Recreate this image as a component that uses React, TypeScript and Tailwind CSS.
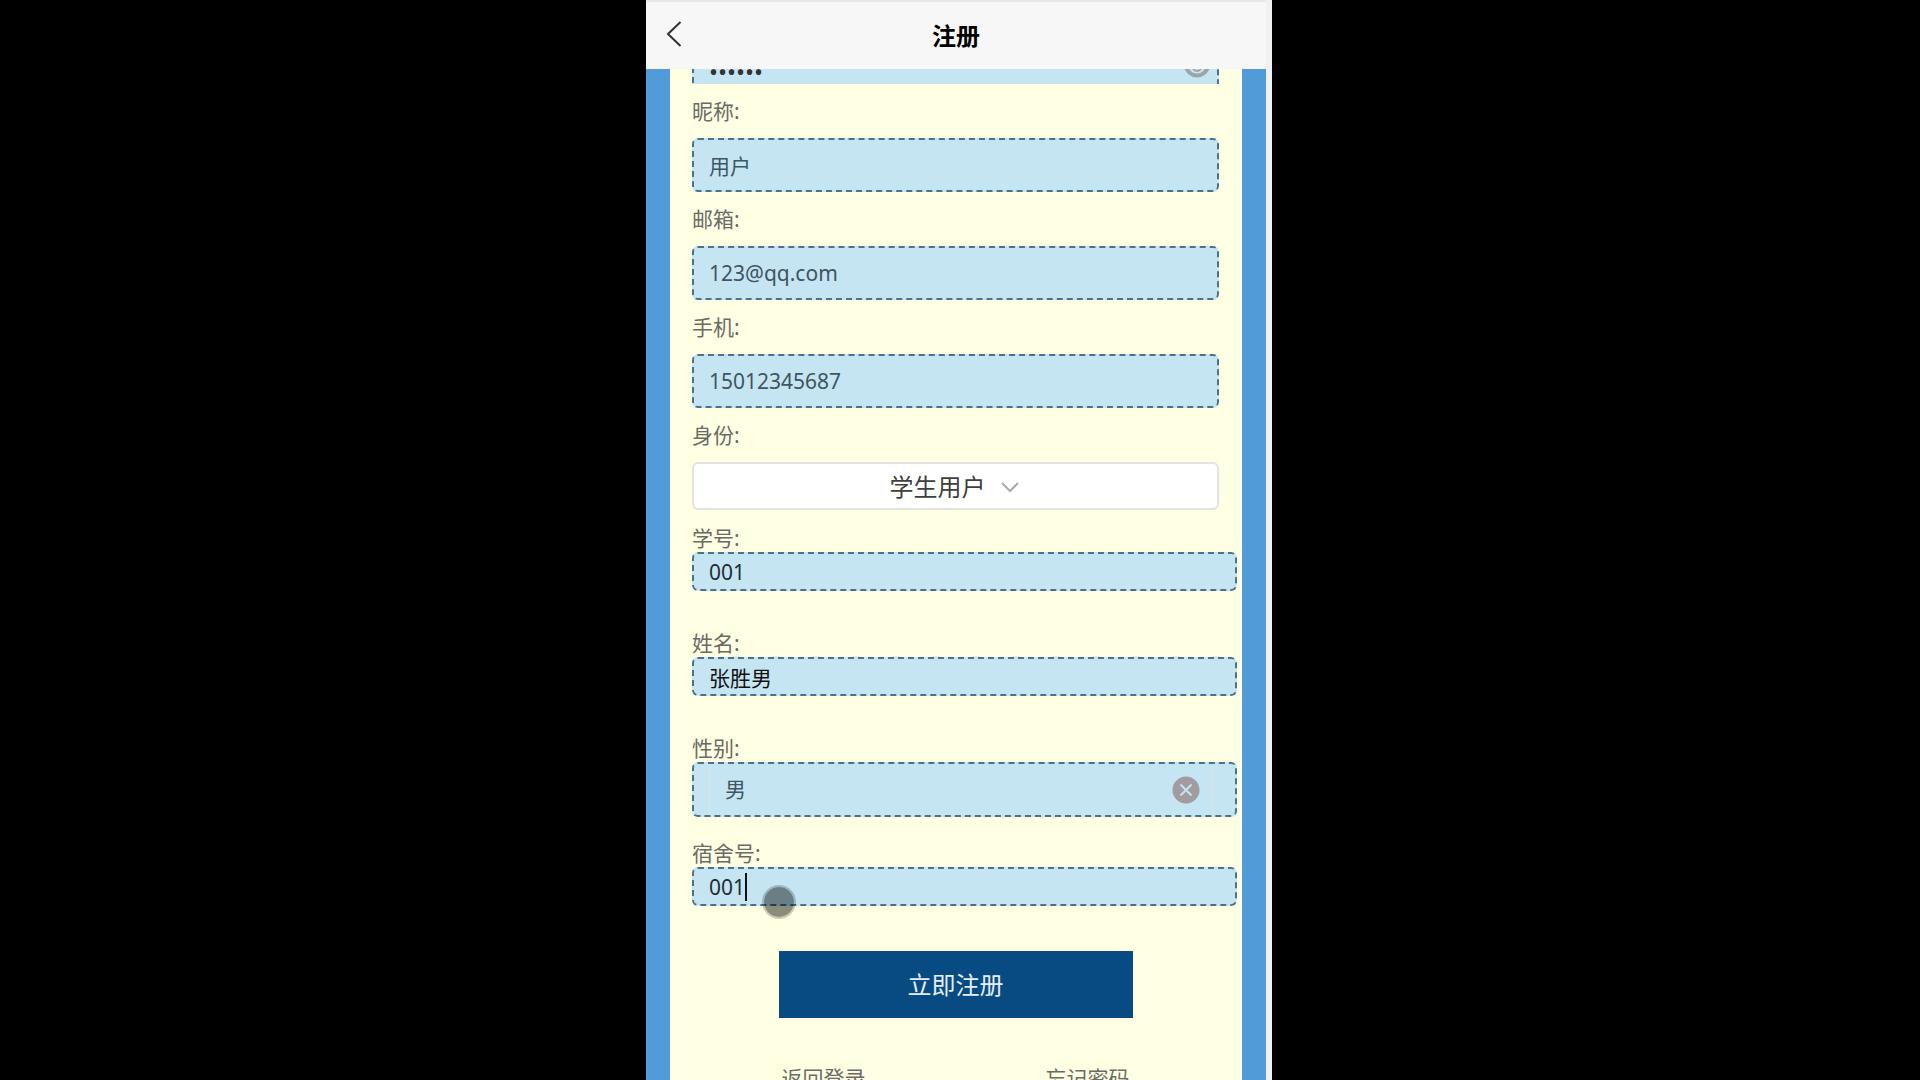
import React from 'react';

const fieldBase =
  'border-2 border-dashed border-[#4a7389] bg-[#c5e5f3] rounded-md outline-none';

type FieldProps = {
  id: string;
  label: string;
  value: string;
  type?: string;
};

const Field: React.FC<FieldProps> = ({ id, label, value, type = 'text' }) => (
  <div className="flex flex-col">
    <label htmlFor={id} className="h-[54px] leading-[54px] text-[21px] text-[#6b6b66]">{label}</label>
    <input id={id} type={type} defaultValue={value} className={`${fieldBase} h-[54px] px-[15px] text-[21px] text-[#3f5561]`} />
  </div>
);

const WideField: React.FC<{ id: string; label: string; children: React.ReactNode }> = ({ id, label, children }) => (
  <div className="flex flex-col h-[105px] -mr-[18px]">
    <label htmlFor={id} className="h-7 leading-7 text-[21px] text-[#6b6b66]">{label}</label>
    {children}
  </div>
);

const Header: React.FC = () => (
  <header className="relative z-10 shrink-0 h-[69px] border-t-2 border-[#e8e8e8] bg-[#f7f7f7] grid grid-cols-[56px_1fr_56px] items-center">
    <button type="button" aria-label="返回" className="h-full pb-1 flex items-center justify-center">
      <svg width="18" height="26" viewBox="0 0 18 26" fill="none" stroke="#333" strokeWidth="2">
        <path d="M15.5 1 3 13l12.5 12" />
      </svg>
    </button>
    <h1 className="text-center text-2xl font-bold text-black">注册</h1>
  </header>
);

export default function App() {
  return (
    <div className="h-screen overflow-hidden bg-black flex justify-center pr-0.5 font-['Noto_Sans','Noto_Sans_CJK_SC',sans-serif]">
      <div className="w-full max-w-[626px] flex bg-[#f1f1f3]">
        <div className="flex-1 min-w-0 flex flex-col">
          <Header />
          <main className="flex-1 min-h-0 overflow-hidden bg-[#529bd9] px-6">
            <form className="min-h-full bg-[#ffffe3] pl-[22px] pr-[23px] -mt-[25px] flex flex-col" onSubmit={(e) => e.preventDefault()}>
              {/* Password row, scrolled under the header */}
              <div className="relative flex flex-col">
                <input
                  type="password"
                  aria-label="密码"
                  defaultValue="123456"
                  className={`${fieldBase} h-[54px] px-[15px] text-2xl text-[#333]`}
                />
                <button type="button" aria-label="显示密码" className="absolute right-2 top-3 text-[#9ca4a9]">
                  <svg width="28" height="22" viewBox="0 0 28 22" fill="none" stroke="currentColor" strokeWidth="4">
                    <path d="M2 9C7-1 21-1 26 9 21 23 7 23 2 9Z" />
                    <circle cx="14" cy="11" r="4" strokeWidth="2" />
                    <path d="M11 12h6" strokeWidth="2" />
                  </svg>
                </button>
              </div>

              <div className="relative -mt-[14px] bg-[#ffffe3] flex flex-col">
                <Field id="nickname" label="昵称:" value="用户" />
                <Field id="email" label="邮箱:" value="123@qq.com" />
                <Field id="phone" label="手机:" value="15012345687" />

                <label htmlFor="role" className="h-[54px] leading-[54px] text-[21px] text-[#6b6b66]">身份:</label>
                <div className="relative">
                  <select
                    id="role"
                    className="appearance-none block w-full h-12 pt-0.5 pr-9 rounded-md border-2 border-[#e3e4e0] bg-white text-2xl text-[#404040] [text-align-last:center]"
                  >
                    <option>学生用户</option>
                  </select>
                  <div className="absolute inset-0 pt-0.5 pl-[108px] flex items-center justify-center pointer-events-none">
                    <svg width="18" height="12" viewBox="0 0 18 12" fill="none" stroke="#aaa" strokeWidth="2">
                      <path d="M1 2l8 8 8-8" />
                    </svg>
                  </div>
                </div>

                <div className="mt-[14px]">
                  <WideField id="studentNo" label="学号:">
                    <input id="studentNo" defaultValue="001" className={`${fieldBase} h-[39px] px-[15px] text-[21px] text-[#1f2d36]`} />
                  </WideField>
                  <WideField id="name" label="姓名:">
                    <input id="name" defaultValue="张胜男" className={`${fieldBase} h-[39px] px-[15px] text-[21px] text-[#111]`} />
                  </WideField>
                  <WideField id="gender" label="性别:">
                    <div className={`${fieldBase} h-[55px] pl-[15px] pr-[22px] flex text-[21px]`}>
                      <div className="flex-1 flex items-center border-x border-[#dde3e3] pl-[15px] pr-3">
                        <input id="gender" defaultValue="男" className="flex-1 min-w-0 bg-transparent outline-none text-[#3f5561]" />
                        <button type="button" aria-label="清除">
                          <svg width="28" height="28" viewBox="0 0 28 28" fill="none">
                            <circle cx="14" cy="14" r="13.5" fill="#a19c9f" />
                            <path d="M8.5 8.5l11 11M19.5 8.5l-11 11" stroke="#c5e5f3" strokeWidth="2" />
                          </svg>
                        </button>
                      </div>
                    </div>
                  </WideField>
                  <WideField id="room" label="宿舍号:">
                    <div className="relative flex flex-col">
                      <input id="room" defaultValue="001" className={`${fieldBase} h-[39px] px-[15px] text-[21px] text-[#1f2d36]`} />
                      <span className="absolute left-[53px] top-[6px] w-0.5 h-7 bg-[#111]" />
                      {/* Touch pointer */}
                      <span className="absolute left-[70px] top-[18px] size-[34px] rounded-full border-2 border-black/20 bg-black/45 bg-clip-padding" />
                    </div>
                  </WideField>
                </div>

                <div className="w-[354px] mx-auto mt-[7px]">
                  <button type="submit" className="block w-full h-[67px] bg-[#084b83] text-2xl text-[#e6eef5]">立即注册</button>
                  <div className="flex justify-between px-[3px] pt-[46px] text-[21px] leading-7 text-[#6b6b66]">
                    <a href="#login">返回登录</a>
                    <a href="#forgot">忘记密码</a>
                  </div>
                </div>
              </div>
            </form>
          </main>
        </div>
        <div className="w-1.5 shrink-0" />
      </div>
    </div>
  );
}
